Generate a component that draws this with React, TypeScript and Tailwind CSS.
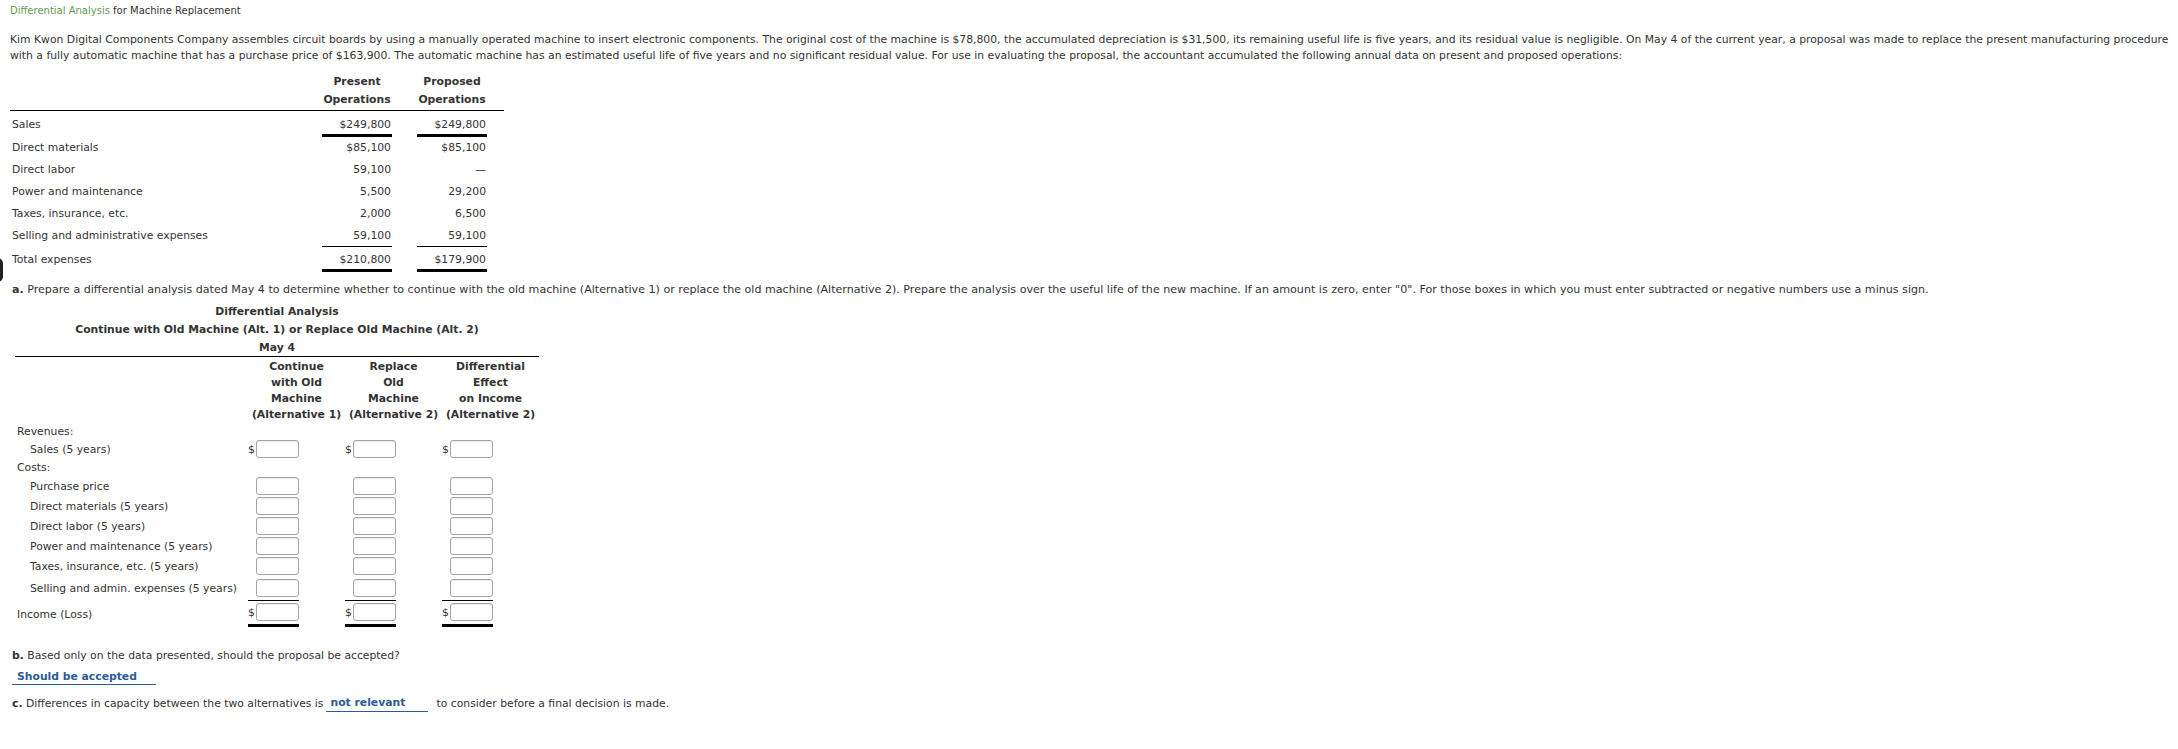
const ink = "text-[#333]";

type Line = "none" | "thin" | "thick";

function OpRow({ label, present, proposed, line = "none", h, pt = "pt-[2px]" }: { label: string; present: string; proposed: string; line?: Line; h: string; pt?: string }) {
  const b = line === "thick" ? "border-b-[3px] border-black" : line === "thin" ? "border-b border-black" : "";
  const bt = line === "thick" ? "border-b-[3px] border-transparent" : line === "thin" ? "border-b border-transparent" : "";
  return (
    <div className={`flex ${h}`}>
      <div className={`w-[312px] pl-[2px] ${pt} flex items-center ${bt}`}>{label}</div>
      <div className={`w-[70px] pr-[1px] ${pt} flex items-center justify-end ${b}`}>{present}</div>
      <div className={`w-[25px] ${bt}`} />
      <div className={`w-[70px] pr-[1px] ${pt} flex items-center justify-end ${b}`}>{proposed}</div>
    </div>
  );
}

function Box() {
  return (
    <div className="w-[43px] h-[18px] bg-white border border-[#a3a3a3] rounded-[3px] shadow-[inset_0_1px_1px_rgba(0,0,0,0.08)]" />
  );
}

function Cell({ dollar = false }: { dollar?: boolean }) {
  return (
    <div className="w-[97px] flex items-center">
      <span className="w-[8px] text-left pt-[2px]">{dollar ? "$" : ""}</span>
      <Box />
    </div>
  );
}

function InputRow({ label, h, dollar = false }: { label: string; h: string; dollar?: boolean }) {
  return (
    <div className={`flex items-center ${h}`}>
      <div className="w-[233px] whitespace-nowrap pl-[15px] pt-[2px]">{label}</div>
      <Cell dollar={dollar} />
      <Cell dollar={dollar} />
      <Cell dollar={dollar} />
    </div>
  );
}

function IncomeCell() {
  return (
    <div className="w-[97px]">
      <div className="w-[51px] flex items-center border-t border-black pt-[2px] pb-[3px] border-b-[3px] border-b-black">
        <span className="w-[8px] pt-[2px]">$</span>
        <Box />
      </div>
    </div>
  );
}

export default function App() {
  return (
    <div className={`relative min-h-screen bg-white ${ink} font-['DejaVu_Sans',Verdana,sans-serif] text-[10.8px]`}>
      <div className="absolute left-[-8px] top-[258px] w-[11px] h-[24px] rounded-full border-[3px] border-[#222]" />
      <div className="pl-[10px] pt-[2px]">
        <div className="h-[17px] leading-[17px] whitespace-nowrap text-[10px]">
          <span className="text-[#5f9a55]">Differential Analysis</span> for Machine Replacement
        </div>

        <div className="mt-[13px] leading-[16px] whitespace-nowrap">
          Kim Kwon Digital Components Company assembles circuit boards by using a manually operated machine to insert electronic components. The original cost of the machine is $78,800, the accumulated depreciation is $31,500, its remaining useful life is five years, and its residual value is negligible. On May 4 of the current year, a proposal was made to replace the present manufacturing procedure
          <br />
          with a fully automatic machine that has a purchase price of $163,900. The automatic machine has an estimated useful life of five years and no significant residual value. For use in evaluating the proposal, the accountant accumulated the following annual data on present and proposed operations:
        </div>

        <div className="mt-[8px] w-[494px]">
          <div className="flex h-[39px] pt-[1px] border-b border-black font-bold leading-[18px]">
            <div className="w-[312px]" />
            <div className="w-[70px] text-center">Present<br />Operations</div>
            <div className="w-[25px]" />
            <div className="w-[70px] text-center">Proposed<br />Operations</div>
          </div>
          <OpRow label="Sales" present="$249,800" proposed="$249,800" line="thick" h="h-[26px]" pt="pt-[6px]" />
          <OpRow label="Direct materials" present="$85,100" proposed="$85,100" h="h-[21px]" pt="pt-[1px]" />
          <OpRow label="Direct labor" present="59,100" proposed="—" h="h-[22px]" />
          <OpRow label="Power and maintenance" present="5,500" proposed="29,200" h="h-[22px]" />
          <OpRow label="Taxes, insurance, etc." present="2,000" proposed="6,500" h="h-[22px]" />
          <OpRow label="Selling and administrative expenses" present="59,100" proposed="59,100" line="thin" h="h-[23px]" />
          <OpRow label="Total expenses" present="$210,800" proposed="$179,900" line="thick" h="h-[25px]" pt="pt-[4px]" />
        </div>

        <div className="mt-[10px] leading-[16px] whitespace-nowrap pl-[2px] text-[11.1px]">
          <b>a.</b> Prepare a differential analysis dated May 4 to determine whether to continue with the old machine (Alternative 1) or replace the old machine (Alternative 2). Prepare the analysis over the useful life of the new machine. If an amount is zero, enter "0". For those boxes in which you must enter subtracted or negative numbers use a minus sign.
        </div>

        <div className="ml-[5px] mt-[4px] w-[524px]">
          <div className="border-b border-black text-center font-bold leading-[18px] pt-[1px]">
            <div>Differential Analysis</div>
            <div>Continue with Old Machine (Alt. 1) or Replace Old Machine (Alt. 2)</div>
            <div className="leading-[17px]">May 4</div>
          </div>
          <div className="flex h-[65px] pt-[2px] font-bold leading-[16px]">
            <div className="w-[233px]" />
            <div className="w-[97px] text-center whitespace-nowrap">Continue<br />with Old<br />Machine<br />(Alternative 1)</div>
            <div className="w-[97px] text-center whitespace-nowrap">Replace<br />Old<br />Machine<br />(Alternative 2)</div>
            <div className="w-[97px] text-center whitespace-nowrap">Differential<br />Effect<br />on Income<br />(Alternative 2)</div>
          </div>
          <div className="flex items-center h-[18px]">
            <div className="pl-[2px] pt-[2px]">Revenues:</div>
          </div>
          <InputRow label="Sales (5 years)" h="h-[18px]" dollar />
          <div className="flex items-center h-[18px]">
            <div className="pl-[2px] pt-[2px]">Costs:</div>
          </div>
          <InputRow label="Purchase price" h="h-[20px]" />
          <InputRow label="Direct materials (5 years)" h="h-[20px]" />
          <InputRow label="Direct labor (5 years)" h="h-[20px]" />
          <InputRow label="Power and maintenance (5 years)" h="h-[20px]" />
          <InputRow label="Taxes, insurance, etc. (5 years)" h="h-[20px]" />
          <InputRow label="Selling and admin. expenses (5 years)" h="h-[24px]" />
          <div className="flex items-center">
            <div className="w-[233px] pl-[2px] pt-[2px]">Income (Loss)</div>
            <IncomeCell />
            <IncomeCell />
            <IncomeCell />
          </div>
        </div>

        <div className="mt-[21px] leading-[16px] pl-[2px]">
          <b>b.</b> Based only on the data presented, should the proposal be accepted?
        </div>
        <div className="mt-[4px] ml-[2px] w-[144px] h-[17px] leading-[17px] pl-[5px] border-b border-[#2b5c98] text-[#2b5c98] font-bold">
          Should be accepted
        </div>

        <div className="mt-[10px] leading-[16px] pl-[2px] flex items-end whitespace-nowrap">
          <span><b>c.</b> Differences in capacity between the two alternatives is</span>
          <span className="ml-[3px] w-[102px] pl-[4px] border-b border-[#2b5c98] text-[#2b5c98] font-bold">not relevant</span>
          <span className="ml-[8px]">to consider before a final decision is made.</span>
        </div>
      </div>
    </div>
  );
}
